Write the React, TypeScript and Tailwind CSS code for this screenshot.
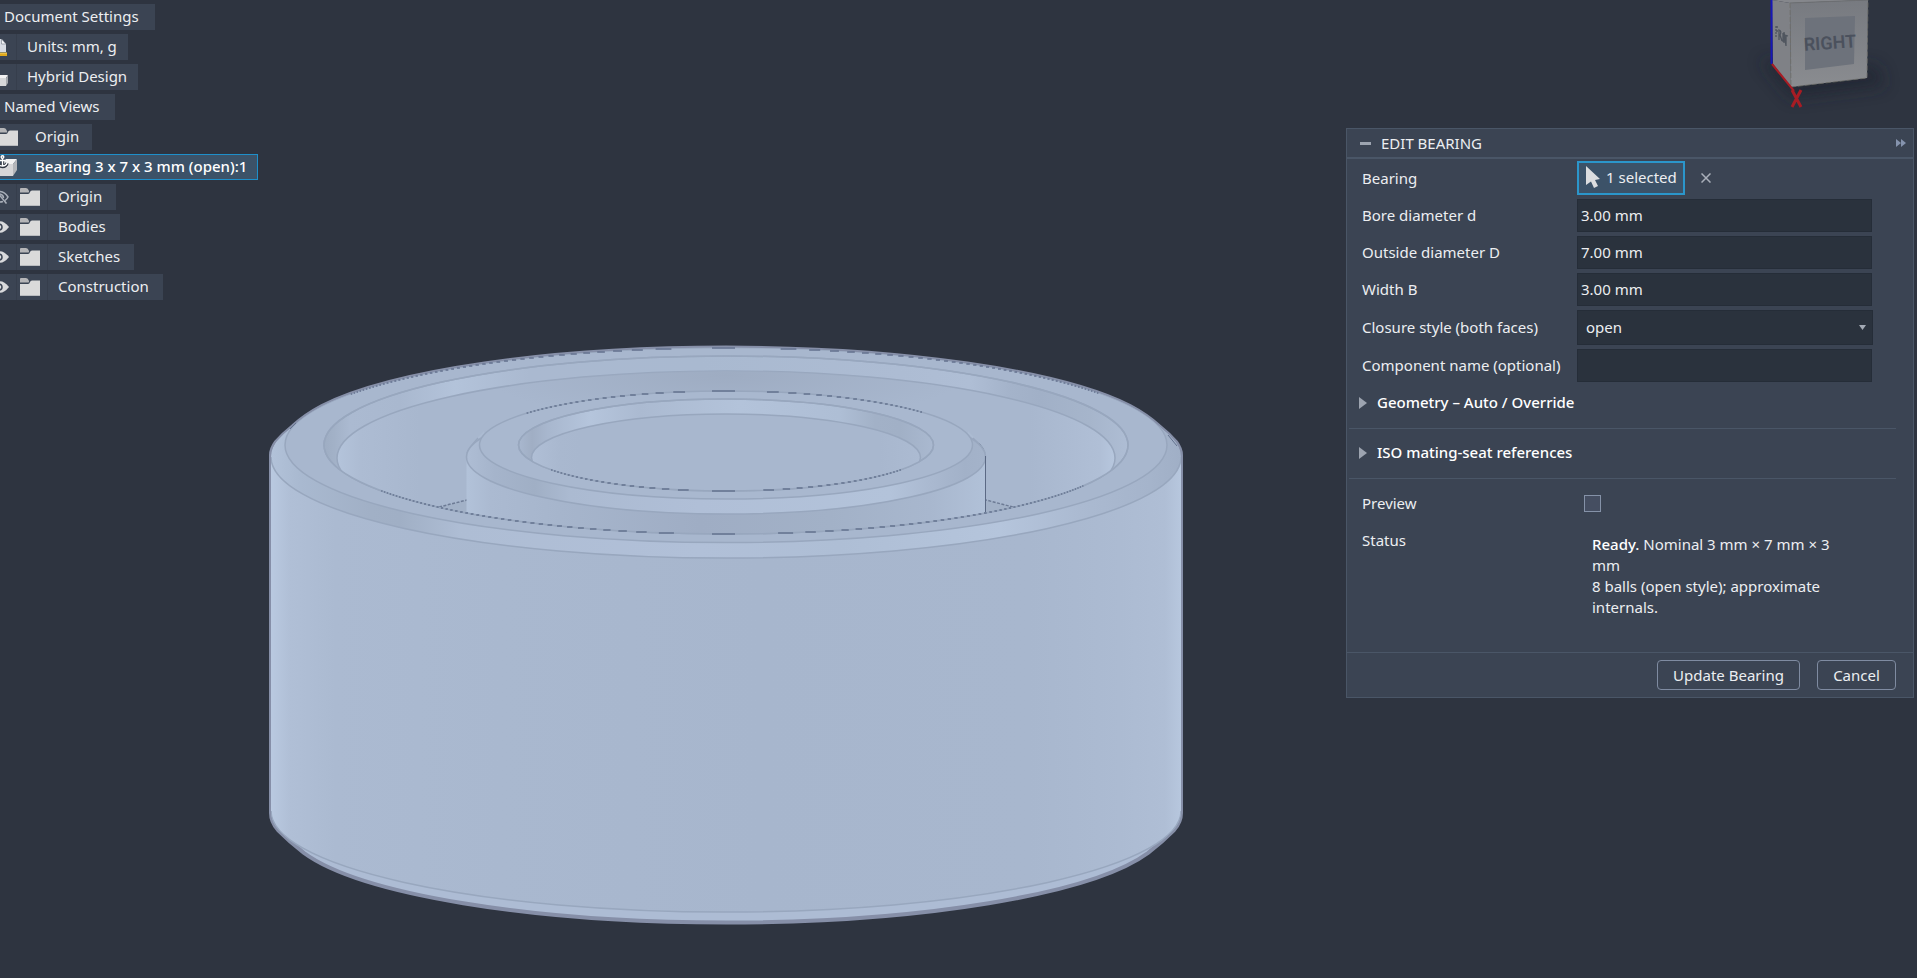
import { ReactNode, useState } from "react";

interface ITreeNode {
  name: string;
  icon?: "units" | "hybrid" | "folderCut" | "component" | "folder";
  eye?: "on" | "off";
  selected?: boolean;
}

const nodes: ITreeNode[] = [
  { name: "Document Settings" },
  { name: "Units: mm, g", icon: "units" },
  { name: "Hybrid Design", icon: "hybrid" },
  { name: "Named Views" },
  { name: "Origin", icon: "folderCut" },
  { name: "Bearing 3 x 7 x 3 mm (open):1", icon: "component", selected: true },
  { name: "Origin", icon: "folder", eye: "off" },
  { name: "Bodies", icon: "folder", eye: "on" },
  { name: "Sketches", icon: "folder", eye: "on" },
  { name: "Construction", icon: "folder", eye: "on" },
];

//#region Icons
function FolderIcon() {
  return (
    <svg width="20" height="18" viewBox="0 0 20 18" className="shrink-0">
      <path d="M0 1 Q0 0 1 0 H6 Q8 0 9 3 Q9.500 4.500 8 4.500 H0Z" fill="#b5b5b7" />
      <path d="M0 6 H8 Q9.500 6 10 4 Q10.500 2.500 12 2.500 H20 V18 H0Z" fill="#dadada" />
      <path d="M0 17 H20 V18 H0Z" fill="#b9bbbe" />
    </svg>
  );
}

function EyeIcon({ off }: { off: boolean }) {
  return (
    <svg width="9" height="16" viewBox="0 0 9 16" className="shrink-0">
      {off ? (
        <g fill="none" stroke="#a9afb9" strokeWidth="1.500">
          <path d="M0 2.500 Q5 3 8 8 Q7 10 5 11.500" />
          <path d="M0 5 Q3.500 6 3.500 9" />
          <path d="M-3 3 L6.500 14.500" />
          <path d="M0 13 Q1.500 13 3 12.500" />
        </g>
      ) : (
        <g>
          <path d="M-9 8 Q0 -3.500 9 8 Q0 19.500 -9 8Z" fill="#d9dadc" />
          <circle cx="-1" cy="8" r="3" fill="none" stroke="#3b4453" strokeWidth="1.500" />
        </g>
      )}
    </svg>
  );
}

function UnitsIcon() {
  return (
    <svg width="8" height="18" viewBox="0 0 8 18" className="shrink-0">
      <path d="M0 1 H1.500 L6 6 V14 H0Z" fill="#d8dce4" />
      <path d="M1.500 1 V6 H6Z" fill="#f4f5f7" stroke="#737b88" strokeWidth=".6" />
      <path d="M0 15 H7 V18 H0Z" fill="#e0a91c" />
      <path d="M0 15 H7" stroke="#f7d668" strokeWidth="1" />
    </svg>
  );
}

function HybridIcon() {
  return (
    <svg width="8" height="18" viewBox="0 0 8 18" className="shrink-0">
      <path d="M0 7 H8 L6 10 H0Z" fill="#f2f2f3" />
      <path d="M0 10 H6 V18 H0Z" fill="#d6d7d9" />
      <path d="M6 10 L8 7 V15 L6 18Z" fill="#a4a7ac" />
    </svg>
  );
}

function ComponentIcon() {
  return (
    <svg width="18" height="22" viewBox="0 0 18 22" className="shrink-0">
      <path d="M0 10 L6 4 H17 L13 9 H8 V12 H0Z" fill="#f3f3f3" />
      <path d="M0 12 H8 V9 H13 V21 H0Z" fill="#d6d6d8" />
      <path d="M13 9 L17 4 V15 L13 21Z" fill="#b4b6ba" />
      <g fill="none" stroke="#2e3440" strokeWidth="3.500">
        <path d="M2.500 2 V11 M-2 8 Q-1 11.500 2.500 11.500 Q6 11.500 7 8" />
      </g>
      <g fill="none" stroke="#fff" strokeWidth="1.400">
        <circle cx="2.500" cy="2" r="1.300" />
        <path d="M2.500 3.500 V11 M0 5.500 H5 M-2 8 Q-1 11 2.500 11 Q6 11 7 8" />
      </g>
    </svg>
  );
}
//#endregion

//#region Tree
function TreeRow({ node }: { node: ITreeNode }) {
  if (node.selected) {
    return (
      <li className="flex h-[26px] items-center gap-[17px] border border-l-0 border-[#1e8fca] bg-[#3c5268] pr-[10px] pb-[2px] font-medium text-white">
        <ComponentIcon />
        {node.name}
      </li>
    );
  }
  return (
    <li className="flex h-[26px] items-center bg-[#3b4453]">
      {(node.icon === "units" || node.icon === "hybrid") && (
        <span className="flex h-full w-[17px] items-center border-r border-[#363e4c]">
          {node.icon === "units" ? <UnitsIcon /> : <HybridIcon />}
        </span>
      )}
      {node.icon === "folderCut" && (
        <span className="flex w-[18px] justify-end overflow-hidden">
          <FolderIcon />
        </span>
      )}
      {node.icon === "folder" && (
        <>
          <span className="flex h-full w-[17px] items-center border-r border-[#363e4c]">
            <EyeIcon off={node.eye === "off"} />
          </span>
          <span className="flex h-full w-[31px] items-center border-r border-[#363e4c] pl-[3px]">
            <FolderIcon />
          </span>
        </>
      )}
      <span
        className={
          node.icon === "folderCut"
            ? "pr-[13px] pb-[2px] pl-[17px]"
            : node.icon === "folder"
              ? "pr-[14px] pb-[2px] pl-[10px]"
              : node.icon
                ? "pr-[11px] pb-[2px] pl-[10px]"
                : "pr-4 pb-[2px] pl-1"
        }
      >
        {node.name}
      </span>
    </li>
  );
}
//#endregion

//#region Bearing
interface IRing {
  cy: number;
  rx: number;
  ry: number;
}
const CX = 726;
const outerTop: IRing = { cy: 445, rx: 441, ry: 97.5 };
const outerEdge: IRing = { cy: 457, rx: 455, ry: 101 };
const raceTop: IRing = { cy: 445, rx: 402, ry: 89 };
const raceEdge: IRing = { cy: 458, rx: 389, ry: 87 };
const innerTop: IRing = { cy: 445, rx: 246.5, ry: 54 };
const innerEdge: IRing = { cy: 457, rx: 259.5, ry: 57 };
const boreTop: IRing = { cy: 445, rx: 207.5, ry: 46 };
const boreEdge: IRing = { cy: 457.5, rx: 194.5, ry: 43.5 };

const LINE = "#98a7be";

function Ellipse({ ring, fill, stroke = LINE }: { ring: IRing; fill: string; stroke?: string }) {
  return <ellipse cx={CX} cy={ring.cy} rx={ring.rx} ry={ring.ry} fill={fill} stroke={stroke} strokeWidth="1.5" />;
}

// one dash for each pixel row the curve crosses, so they get longer near the middle
function dashes(ring: IRing, side: 1 | -1, left: number, right: number) {
  let d = "";
  const at = (t: number) => ring.rx * Math.sqrt(Math.max(0, 1 - (t / ring.ry) * (t / ring.ry)));
  const max = Math.floor(ring.ry);
  for (let i = 1; i < max; i++) {
    const t = ring.ry - i;
    const far = at(t - 0.25);
    const near = at(t + 0.25);
    const y = Math.round(ring.cy + side * t);
    if (CX - far > left) d += `M${CX - far} ${y}H${CX - near}`;
    if (CX + far < right) d += `M${CX + near} ${y}H${CX + far}`;
  }
  const y = Math.round(ring.cy + side * ring.ry);
  return d + `M${CX - 14} ${y}H${CX + 9}`;
}

function Gradient({ id, x1, x2, stops }: { id: string; x1: number; x2: number; stops: [number, string][] }) {
  return (
    <linearGradient id={id} gradientUnits="userSpaceOnUse" x1={x1} x2={x2} y1="0" y2="0">
      {stops.map(([x, color]) => (
        <stop key={x} offset={(x - x1) / (x2 - x1)} stopColor={color} />
      ))}
    </linearGradient>
  );
}

const HULL =
  "M271 455 Q271 449 276 442 Q283 434 293 426 Q305 415 322 406 A441 97.500 0 0 1 1130 406 Q1147 415 1159 426 Q1169 434 1176 442 Q1181 449 1181 455 V813 Q1181 822 1174 830 Q1162 842 1148 853 A441 98 0 0 1 304 853 Q290 842 278 830 Q271 822 271 813Z";

function Bearing() {
  return (
    <svg
      viewBox="0 0 1917 978"
      preserveAspectRatio="xMinYMin meet"
      className="absolute inset-0 h-full w-full"
      role="img"
      aria-label="Bearing model"
    >
      <defs>
        <Gradient id="bodyFill" x1={271} x2={1181} stops={[[271, "#b9c9e0"], [290, "#b0bfd6"], [335, "#abbad1"], [500, "#a9b8cf"], [760, "#a7b6cd"], [1030, "#a8b7ce"], [1120, "#acbbd2"], [1165, "#afbed5"], [1181, "#b7c7de"]]} />
        <Gradient id="rim" x1={271} x2={1181} stops={[[271, "#b2c2d9"], [300, "#a9b9d0"], [370, "#a1b0c6"], [400, "#a0afc5"], [460, "#aebdd4"], [700, "#b1c0d8"], [840, "#aebed5"], [1000, "#b5c5dc"], [1080, "#abbad1"], [1150, "#a5b4cb"], [1181, "#a0afc6"]]} />
        <Gradient id="race" x1={324} x2={1128} stops={[[324, "#9eadc3"], [334, "#a2b1c7"], [350, "#abbad1"], [400, "#a9b8cf"], [455, "#b3c3da"], [530, "#aab9d0"], [700, "#a9b9d0"], [900, "#adbcd3"], [970, "#afbed5"], [1010, "#a4b3ca"], [1040, "#a1b0c7"], [1090, "#a6b5cb"], [1128, "#aebdd4"]]} />
        <Gradient id="wall" x1={337} x2={1115} stops={[[337, "#b4c4db"], [360, "#adbcd3"], [420, "#a8b7ce"], [1030, "#a8b7ce"], [1100, "#b0bfd6"], [1115, "#b7c7de"]]} />
        <Gradient id="ringRim" x1={467} x2={986} stops={[[467, "#aebdd4"], [495, "#a5b4cb"], [535, "#a0afc5"], [570, "#abbad1"], [700, "#b0bfd7"], [890, "#b3c3da"], [930, "#aab9d0"], [965, "#a2b1c8"], [986, "#a4b3ca"]]} />
        <Gradient id="ringSide" x1={467} x2={986} stops={[[467, "#b2c2d9"], [490, "#abbad1"], [560, "#a6b5cc"], [700, "#9fadc4"], [830, "#a2b1c7"], [930, "#a8b7ce"], [986, "#b1c1d8"]]} />
        <Gradient id="boreRim" x1={518} x2={934} stops={[[518, "#a9b8cf"], [532, "#a0aec4"], [548, "#a8b7ce"], [590, "#b5c5dc"], [640, "#abbad1"], [740, "#b3c3da"], [840, "#aebed5"], [875, "#a2b1c7"], [900, "#a1b0c6"], [934, "#aab9d0"]]} />
        <Gradient id="boreFill" x1={531} x2={921} stops={[[531, "#b0bfd6"], [560, "#a9b8cf"], [580, "#a8b7ce"], [880, "#a8b7ce"], [921, "#acbbd2"]]} />
        <radialGradient id="shade" gradientUnits="userSpaceOnUse" cx="726" cy="375" r="240" gradientTransform="matrix(1 0 0 .2 0 300)">
          <stop offset="0" stopColor="#9eacc2" />
          <stop offset="1" stopColor="#9eacc2" stopOpacity="0" />
        </radialGradient>
        <clipPath id="inRace">
          <ellipse cx={CX} cy={raceTop.cy} rx={raceTop.rx} ry={raceTop.ry} />
        </clipPath>
        <clipPath id="inWall">
          <ellipse cx={CX} cy={raceEdge.cy} rx={raceEdge.rx} ry={raceEdge.ry} />
        </clipPath>
        <clipPath id="inBore">
          <ellipse cx={CX} cy={boreTop.cy} rx={boreTop.rx} ry={boreTop.ry} />
        </clipPath>
        <clipPath id="hull">
          <path d={HULL} />
        </clipPath>
      </defs>

      <path d={HULL} fill="#adbcd4" stroke="#868fa8" strokeWidth="4" />
      <g clipPath="url(#hull)">
        <path d="M271 457 V811 A455 101 0 0 0 1181 811 V457Z" fill="url(#bodyFill)" />
        <path d="M271 811 A455 101 0 0 0 1181 811" fill="none" stroke={LINE} strokeWidth="1.5" />
        <ellipse cx={CX} cy={outerEdge.cy} rx={outerEdge.rx} ry={outerEdge.ry} fill="url(#rim)" />
        <path d="M271 457 A455 101 0 0 0 1181 457" fill="none" stroke={LINE} strokeWidth="1.5" />
        <Ellipse ring={outerTop} fill="#a8b7ce" />
      </g>
      <path d={dashes(outerTop, -1, 350, 1100)} stroke="#64728e" strokeWidth="1.5" />
      <path d="M290 429 L296 423 M1168 435 L1177 446" stroke="#64728e" strokeWidth="1" />

      <Ellipse ring={raceTop} fill="url(#race)" />
      <g clipPath="url(#inRace)">
        <Ellipse ring={raceEdge} fill="url(#wall)" />
        <g clipPath="url(#inWall)">
          <ellipse cx={CX} cy="375" rx="240" ry="48" fill="url(#shade)" />
        </g>
        <path d="M439 507 L467 500 V515Z M1013 507 L986 500 V515Z" fill="#a2b1c7" />
        <path d="M439 507 L467 500 M1013 507 L986 500" stroke="#6d7b95" strokeWidth="1.5" strokeDasharray="3 1.5" />
        <path d="M466.500 457 V560 H985.500 V457Z" fill="url(#ringSide)" />
        <path d="M467 452 L478 437 L484 431 V460Z M985 452 L974 437 L968 431 V460Z" fill="#acbbd2" />
        <path d="M467 453 Q469 448 478 438 M985 453 Q983 447 973 438" fill="none" stroke={LINE} strokeWidth="1.5" />
        <path d="M979 444 L983 449" stroke="#56627b" strokeWidth="1.5" />
      </g>
      <Ellipse ring={innerEdge} fill="url(#ringRim)" />
      <path d="M985.500 456 V512" stroke="#5b6984" strokeWidth="1" />
      <Ellipse ring={raceTop} fill="none" />
      <path d={dashes(raceTop, 1, 380, 1085)} stroke="#71809b" strokeWidth="2" />

      <Ellipse ring={innerTop} fill="#a9b8cf" />
      <path d={dashes(innerTop, -1, 525, 925)} stroke="#71809b" strokeWidth="2" />
      <Ellipse ring={boreTop} fill="url(#boreRim)" />
      <g clipPath="url(#inBore)">
        <Ellipse ring={boreEdge} fill="url(#boreFill)" />
      </g>
      <Ellipse ring={boreTop} fill="none" />
      <path d={dashes(boreTop, 1, 550, 903)} stroke="#71809b" strokeWidth="2" />
    </svg>
  );
}

function ViewCube() {
  return (
    <svg width="177" height="120" viewBox="0 0 177 120" className="absolute top-0 right-0" role="img" aria-label="View cube">
      <defs>
        <linearGradient id="cubeFace" x1="0" x2="0" y1="0" y2="1">
          <stop offset="0" stopColor="#777a80" />
          <stop offset="1" stopColor="#8a8c90" />
        </linearGradient>
        <filter id="cubeShadow" x="-30%" y="-80%" width="160%" height="260%">
          <feGaussianBlur stdDeviation="8" />
        </filter>
      </defs>
      <path d="M20 60 L52 98 L145 86 L138 66Z" fill="#1e232d" opacity=".6" filter="url(#cubeShadow)" />
      <path d="M32 0 H128 L50 3Z" fill="#85878c" />
      <path d="M32 0 L50 3 L51 87 L33 64Z" fill="#7f8186" />
      <path d="M50 3 L128 0 L127 78 L51 87Z" fill="url(#cubeFace)" />
      <path d="M50 3 L128 0" stroke="#6d6f72" strokeWidth="1" />
      <path d="M50 3 L51 87 L127 78 L128 0" fill="none" stroke="#6f6e69" strokeWidth=".8" strokeDasharray="5 2" />
      <path d="M65 18 L115 16 L114 64 L65 70Z" fill="#6d727b" />
      <text x="90" y="49" transform="rotate(-4 90 44)" textAnchor="middle" fill="#4b515d" className="font-['Roboto',sans-serif] text-[18px] font-semibold">
        RIGHT
      </text>
      <g fill="none" stroke="#50565f" strokeWidth="1.300">
        <path d="M36 26 V37 M36 27 H38 M36 31 H38" strokeDasharray="2 1" />
        <path d="M39 40 V30 Q42 31 40 35 L42 41 M43 33 V42 M44 43 V32 L46 46 V35 M45 35 L48 36" />
      </g>
      <path d="M31.500 0 V64" stroke="#1717b8" strokeWidth="2" />
      <path d="M32 64 L54 91" stroke="#a81c24" strokeWidth="2" />
      <path d="M52 90 L61 107 M61 90 L52 107" stroke="#a81c24" strokeWidth="3" />
    </svg>
  );
}
//#endregion

//#region Edit panel
function Row({ label, id, children }: { label: string; id: string; children: ReactNode }) {
  return (
    <div className="flex items-center">
      <label htmlFor={id} className="w-[215px] shrink-0">
        {label}
      </label>
      {children}
    </div>
  );
}

function Section({ title }: { title: string }) {
  return (
    <button type="button" className="flex h-[50px] w-full items-center gap-[10px] border-b border-[#4a5667] pb-[2px] pl-[10px] font-medium text-white">
      <svg width="8" height="12" viewBox="0 0 8 12">
        <path d="M0 0 L8 6 L0 12Z" fill="#9da4b0" />
      </svg>
      {title}
    </button>
  );
}

const field = "h-[33px] w-[295px] border border-[#252d38] bg-[#2a323d] px-[3px] pb-[2px] outline-none";

function EditBearing() {
  const [bore, setBore] = useState("3.00 mm");
  const [outside, setOutside] = useState("7.00 mm");
  const [width, setWidth] = useState("3.00 mm");
  const [closure, setClosure] = useState("open");
  const [name, setName] = useState("");
  const [preview, setPreview] = useState(false);

  return (
    <section className="relative mt-32 mr-[3px] w-[568px] self-start border border-[#4a5667] bg-[#3b4453]">
      <header className="flex h-[30px] items-center gap-[10px] border-b-2 border-[#4a5667] pr-[7px] pl-[13px]">
        <button type="button" aria-label="Collapse" className="h-[3px] w-[11px] bg-[#9da4b0]" />
        <h2 className="grow">EDIT BEARING</h2>
        <button type="button" aria-label="Dock">
          <svg width="10" height="8" viewBox="0 0 10 8">
            <path d="M0 0 L5 4 L0 8Z M5 0 L10 4 L5 8Z" fill="#8593ad" />
          </svg>
        </button>
      </header>

      <div className="flex flex-col gap-1 pt-[2px] pl-[15px]">
        <Row label="Bearing" id="selection">
          <button id="selection" type="button" className="flex h-[34px] w-[108px] items-center gap-[6px] border-2 border-[#2b96cb] bg-[#3c5268] pb-[2px] pl-[7px] whitespace-nowrap">
            <svg width="14" height="22" viewBox="0 0 14 22" className="shrink-0">
              <path d="M0 0 L14 13 L9 14 L12 20 L8 22 L5 15.500 L0 19Z" fill="#dcdddf" />
            </svg>
            1 selected
          </button>
          <button type="button" aria-label="Clear selection" className="ml-4">
            <svg width="10" height="10" viewBox="0 0 10 10" stroke="#a9afba" strokeWidth="1.5">
              <path d="M.5 .5 L9.500 9.500 M9.500 .5 L.5 9.500" />
            </svg>
          </button>
        </Row>
        <Row label="Bore diameter d" id="bore">
          <input id="bore" className={field} value={bore} onChange={(e) => setBore(e.target.value)} />
        </Row>
        <Row label="Outside diameter D" id="outside">
          <input id="outside" className={field} value={outside} onChange={(e) => setOutside(e.target.value)} />
        </Row>
        <Row label="Width B" id="width">
          <input id="width" className={field} value={width} onChange={(e) => setWidth(e.target.value)} />
        </Row>
        <Row label="Closure style (both faces)" id="closure">
          <div className="relative">
            <select
              id="closure"
              className="block h-[35px] w-[296px] appearance-none border border-[#252d38] bg-[#2a323d] px-2 outline-none"
              value={closure}
              onChange={(e) => setClosure(e.target.value)}
            >
              <option value="open">open</option>
            </select>
            <svg width="7" height="5" viewBox="0 0 7 5" className="pointer-events-none absolute top-[15px] right-[7px]">
              <path d="M0 0 H7 L3.500 5Z" fill="#a3aab5" />
            </svg>
          </div>
        </Row>
        <Row label="Component name (optional)" id="name">
          <input id="name" className={field} value={name} onChange={(e) => setName(e.target.value)} />
        </Row>
      </div>

      <div className="-mt-[3px] mr-[17px] ml-[2px]">
        <Section title="Geometry – Auto / Override" />
        <Section title="ISO mating-seat references" />
      </div>

      <div className="pl-[15px]">
        <div className="flex h-[49px] items-center">
          <label htmlFor="preview" className="w-[222px]">
            Preview
          </label>
          <input
            id="preview"
            type="checkbox"
            className="size-[17px] appearance-none border border-[#8592a8] bg-[#454e61] checked:bg-[#2b96cb]"
            checked={preview}
            onChange={(e) => setPreview(e.target.checked)}
          />
        </div>
        <div className="flex h-[124px]">
          <span className="w-[230px] pt-[2px] leading-[21px]">Status</span>
          <p className="w-[240px] pt-[6px] leading-[21px]">
            <b className="font-medium text-white">Ready.</b> Nominal 3 mm × 7 mm × 3 mm
            <br />8 balls (open style); approximate internals.
          </p>
        </div>
      </div>

      <footer className="flex h-[45px] items-center justify-end gap-[17px] border-t border-[#4a5667] pr-[17px]">
        <button type="button" className="h-[30px] w-[143px] rounded-sm border border-[#7f8ba1]">
          Update Bearing
        </button>
        <button type="button" className="h-[30px] w-[79px] rounded-sm border border-[#7f8ba1]">
          Cancel
        </button>
      </footer>
    </section>
  );
}
//#endregion

function App() {
  return (
    <main className="relative flex min-h-screen justify-between overflow-hidden bg-[#2e3440] font-['Noto_Sans',sans-serif] text-[15px] text-[#eceef1]">
      <Bearing />
      <ViewCube />
      <ul className="relative flex flex-col items-start gap-1 self-start pt-1 whitespace-nowrap">
        {nodes.map((node, i) => (
          <TreeRow key={i} node={node} />
        ))}
      </ul>
      <EditBearing />
    </main>
  );
}
export default App;
